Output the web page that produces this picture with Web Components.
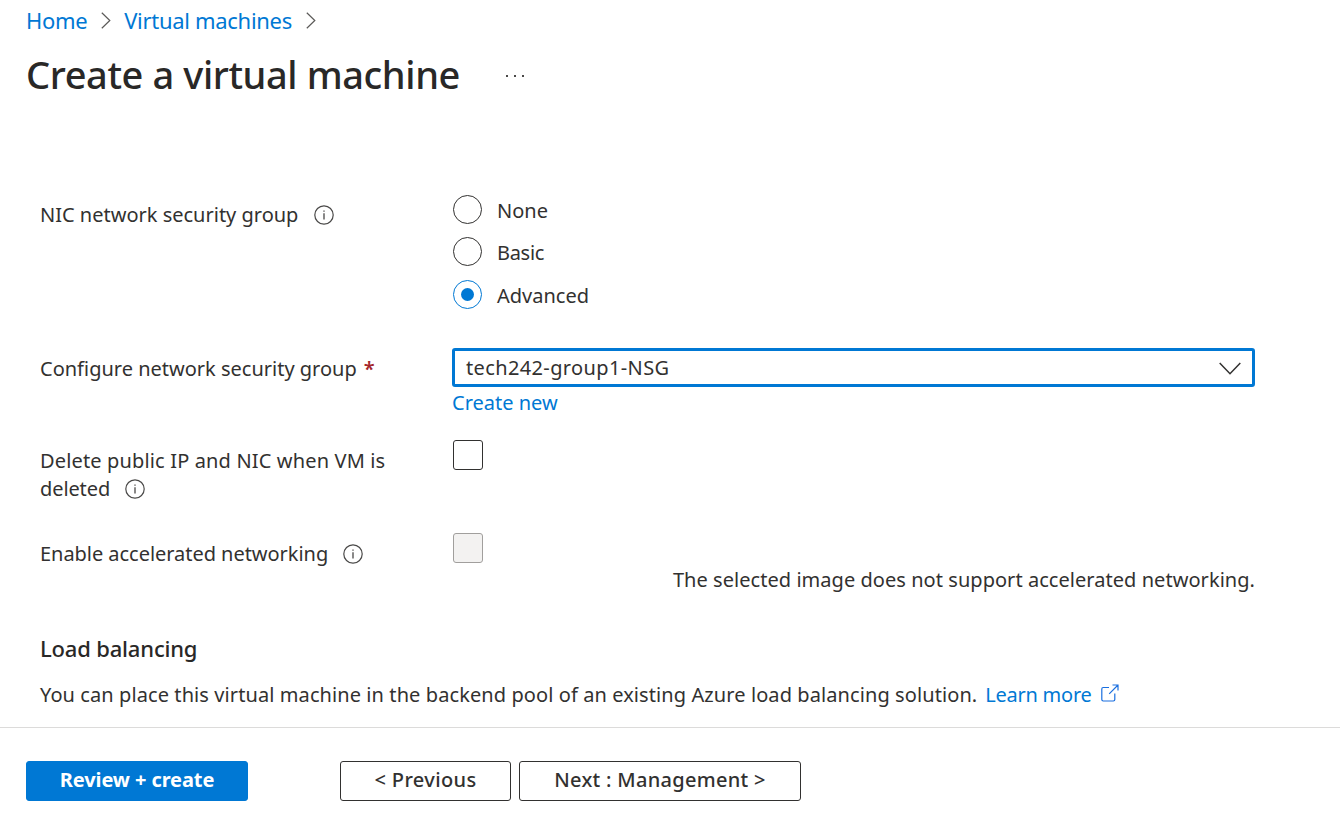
<!DOCTYPE html>
<html lang="en"><head><meta charset="utf-8"><title>Create a virtual machine</title>
<style>html,body{margin:0;background:#fff}body{font-family:"Noto Sans","Open Sans",sans-serif}</style></head>
<body><vm-page></vm-page>
<script>
const define=(name,html)=>customElements.define(name,class extends HTMLElement{
  constructor(){super();const t=document.createElement('template');t.innerHTML=html;
    this.attachShadow({mode:'open'}).append(t.content.cloneNode(true));}
});
define('az-info',`<style>:host{display:inline-block;width:20px;height:20px;vertical-align:-3px;margin-left:15px}svg{display:block}</style>
<svg width="20" height="20" viewBox="0 0 20 20"><circle cx="10" cy="10" r="9.2" fill="none" stroke="#4a4948" stroke-width="1.2"/><path d="M10 8.3V14.5M10 5.4V6.8" stroke="#4a4948" stroke-width="1.3"/></svg>`);
define('az-text',`<style>:host{display:inline-block;white-space:nowrap}</style><slot></slot>`);
define('az-chevron',`<style>:host{display:block;width:10px;height:17px}svg{display:block}</style><svg width="10" height="17" viewBox="0 0 10 17"><path d="M.8.8 8.8 8.5.8 16.2" fill="none" stroke="#5b5a58" stroke-width="1.2"/></svg>`);
define('az-radio',`<style>:host{display:flex;height:28px;align-items:flex-start;gap:15px;line-height:32px}i{box-sizing:border-box;width:29px;height:29px;border:1.3px solid #323130;border-radius:50%;display:grid;place-items:center;flex:none}
:host([checked]) i{border-color:#0078d4}:host([checked]) i::after{content:"";width:13px;height:13px;border-radius:50%;background:#0078d4}</style><i></i><slot></slot>`);
define('az-check',`<style>:host{display:block;box-sizing:border-box;width:30px;height:30px;border:1px solid #323130;border-radius:3px;margin-left:1px}:host([disabled]){background:#f3f2f1;border-color:#a19f9d}</style>`);
define('az-select',`<style>:host{display:flex;box-sizing:border-box;height:39px;border:3px solid #0078d4;border-radius:3px;align-items:center;justify-content:space-between;padding:0 11px;line-height:28px}svg{display:block;margin-top:1px}</style><slot></slot><svg width="22" height="13" viewBox="0 0 22 13"><path d="M.7 1 11 11.7 21.3 1" fill="none" stroke="#323130" stroke-width="1.5"/></svg>`);
define('az-button',`<style>:host{display:flex;box-sizing:border-box;height:40px;align-items:center;justify-content:center;border:1px solid #323130;border-radius:3px;font-weight:500;padding-bottom:3px}:host([primary]){background:#0078d4;border-color:#0078d4;color:#fff;font-weight:700}</style><slot></slot>`);
define('vm-header',`<style>:host{display:block;padding-left:26px;height:188px;box-sizing:border-box}nav{display:flex;align-items:center;color:#0078d4;font-size:22px;line-height:30px;padding-top:5px}
.title{display:flex;align-items:center;gap:45px;padding-top:13px}h1{margin:0;font-size:38px;line-height:52px;font-weight:500;color:#292827;width:434px;letter-spacing:-.4px}.title svg{margin-top:4px}svg{display:block}</style>
<nav><az-text style="letter-spacing:-.35px">Home</az-text><az-chevron style="margin:1px 13px 0 14px"></az-chevron><az-text style="letter-spacing:-.3px">Virtual machines</az-text><az-chevron style="margin:1px 0 0 14px"></az-chevron></nav>
<div class="title"><h1><az-text>Create a virtual machine</az-text></h1><svg width="20" height="4"><path d="M1 1h2v2h-2zM9 1h2v2h-2zM17 1h2v2h-2z" fill="#4a4948"/></svg></div>`);
define('az-row',`<style>:host{display:grid;box-sizing:border-box;grid-template-columns:412px 803px;padding-left:40px;align-items:start;line-height:28px}</style><slot name="label"></slot><slot></slot>`);
define('vm-form',`<style>:host{display:block;height:539px;box-sizing:border-box}a{color:#0078d4;display:block}.r{display:grid;grid-template-rows:28px 28px 28px;row-gap:14.4px;margin-left:1px}
az-row.a{height:153px;padding-top:7px}az-row.b{height:92px}az-row.c{height:93px}az-row.d{height:98px}h2{font-size:22px;line-height:30px;margin:0 0 0 40px;font-weight:500;color:#292827;letter-spacing:-.18px}
p{margin:0;text-align:right}.lb{margin:18px 0 0 40px;display:flex;line-height:28px}.lb a{margin-left:8px}.lb svg{margin:3px 0 0 9px}.star{color:#a4262c;font-weight:600;margin-left:7px}</style>
<az-row class="a"><div slot="label" style="padding-top:6px"><az-text>NIC network security group</az-text><az-info style="margin-left:16px"></az-info></div><div class="r"><az-radio><az-text>None</az-text></az-radio><az-radio><az-text style="letter-spacing:-.3px">Basic</az-text></az-radio><az-radio checked><az-text>Advanced</az-text></az-radio></div></az-row>
<az-row class="b"><div slot="label" style="padding-top:14px"><az-text>Configure network security group</az-text><az-text class="star">*</az-text></div><div style="padding-top:7px"><az-select><az-text style="letter-spacing:.37px">tech242-group1-NSG</az-text></az-select><a style="margin-top:2px"><az-text>Create new</az-text></a></div></az-row>
<az-row class="c"><div slot="label" style="padding-top:14px"><az-text style="letter-spacing:.15px">Delete public IP and NIC when VM is</az-text><br><az-text style="letter-spacing:-.1px">deleted</az-text><az-info></az-info></div><az-check style="margin-top:7px"></az-check></az-row>
<az-row class="d"><div slot="label" style="padding-top:14px"><az-text style="letter-spacing:-.04px">Enable accelerated networking</az-text><az-info></az-info></div><div style="padding-top:7px"><az-check disabled></az-check><p style="margin-top:3px"><az-text style="letter-spacing:.045px">The selected image does not support accelerated networking.</az-text></p></div></az-row>
<h2 style="padding-top:9px"><az-text>Load balancing</az-text></h2>
<div class="lb"><az-text style="letter-spacing:.089px">You can place this virtual machine in the backend pool of an existing Azure load balancing solution.</az-text><a><az-text style="letter-spacing:-.25px">Learn more</az-text></a><svg width="18" height="18" viewBox="0 0 18 18"><path d="M8 3.5H2.2Q.8 3.5.8 4.9V15.6Q.8 17 2.2 17H12.4Q13.8 17 13.8 15.6V9.5M8.2 9.8 17 1M11.5 1H17V6.5" fill="none" stroke="#1a6fdf" stroke-width="1.2"/></svg></div>`);
define('vm-footer',`<style>:host{display:flex;height:108px;box-sizing:border-box;border-top:1px solid #dcdbda;padding:33px 0 0 26px}</style>
<az-button primary style="width:222px"><az-text style="letter-spacing:-.1px">Review + create</az-text></az-button><az-button style="width:171px;margin-left:92px"><az-text style="letter-spacing:.36px">&lt; Previous</az-text></az-button><az-button style="width:282px;margin-left:8px"><az-text style="letter-spacing:.3px">Next : Management &gt;</az-text></az-button>`);
define('vm-page',`<style>:host{display:block;width:1340px;height:835px;overflow:hidden;font-size:20px;color:#323130;background:#fff}</style><vm-header></vm-header><vm-form></vm-form><vm-footer></vm-footer>`);
</script></body></html>
